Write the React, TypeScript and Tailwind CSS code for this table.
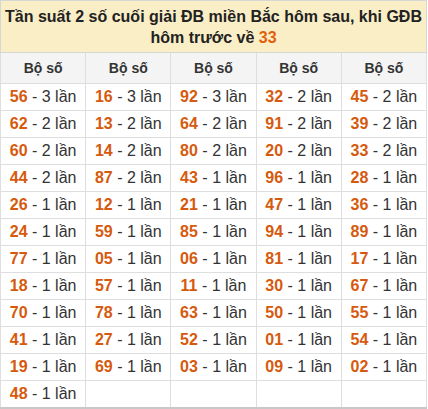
import React from "react";

const cols: string[][] = [
  ["56-3", "62-2", "60-2", "44-2", "26-1", "24-1", "77-1", "18-1", "70-1", "41-1", "19-1", "48-1"],
  ["16-3", "13-2", "14-2", "87-2", "12-1", "59-1", "05-1", "57-1", "78-1", "27-1", "69-1"],
  ["92-3", "64-2", "80-2", "43-1", "21-1", "85-1", "06-1", "11-1", "63-1", "52-1", "03-1"],
  ["32-2", "91-2", "20-2", "96-1", "47-1", "94-1", "81-1", "30-1", "50-1", "01-1", "09-1"],
  ["45-2", "39-2", "33-2", "28-1", "36-1", "89-1", "17-1", "67-1", "55-1", "54-1", "02-1"],
];

export default function App() {
  const rows = Array.from({ length: 12 }, (_, r) => cols.map((c) => c[r]));
  return (
    <div
      className="w-[428px] h-[409px] bg-white"
      style={{ fontFamily: '"Liberation Sans", Arial, sans-serif' }}
    >
      <table className="w-[427px] border-collapse table-fixed border-b-2 border-b-[#c8c8c8]">
        <thead>
          <tr>
            <th
              colSpan={5}
              className="h-[52px] bg-[#faeec6] border border-[#d6d6d6] text-[16px] leading-[21px] font-bold text-[#222] px-0 text-center whitespace-nowrap"
            >
              Tần suất 2 số cuối giải ĐB miền Bắc hôm sau, khi GĐB
              <br />
              hôm trước về <span className="text-[#e0610a]">33</span>
            </th>
          </tr>
          <tr>
            {cols.map((_, i) => (
              <th
                key={i}
                className="h-[31px] bg-[#f4f4f4] border border-[#dedede] text-[14px] font-bold text-[#333] text-center"
              >
                Bộ số
              </th>
            ))}
          </tr>
        </thead>
        <tbody>
          {rows.map((row, r) => (
            <tr key={r}>
              {row.map((v, i) => {
                if (!v) return <td key={i} className="h-[27px] border border-[#dedede]" />;
                const [n, c] = v.split("-");
                return (
                  <td
                    key={i}
                    className="h-[27px] border border-[#dedede] text-center text-[16px] text-[#333] whitespace-nowrap"
                  >
                    <span className="font-bold text-[#d65a0d]">{n}</span> - {c} lần
                  </td>
                );
              })}
            </tr>
          ))}
        </tbody>
      </table>
    </div>
  );
}
